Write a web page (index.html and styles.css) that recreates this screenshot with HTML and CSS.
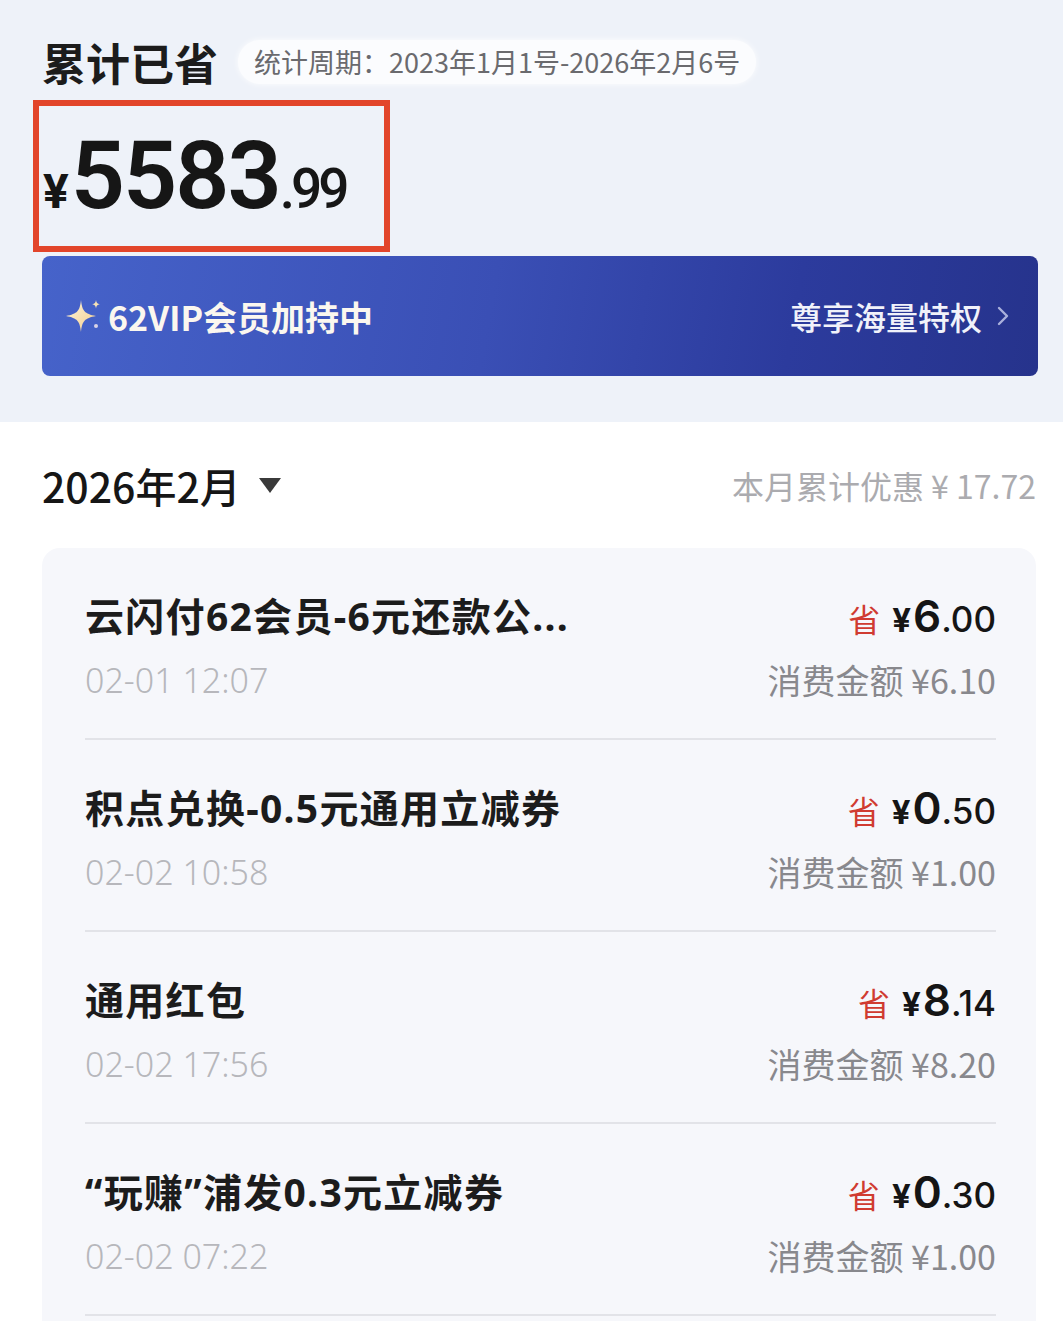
FILE: index.html
```html
<!DOCTYPE html>
<html lang="zh-CN">
<head>
    <meta charset="UTF-8">
    <meta name="viewport" content="width=device-width, initial-scale=1.0">
    <title>累计已省</title>
    <link rel="stylesheet" href="styles.css">
</head>
<body>
    <div class="top">
        <div class="head-row">
            <h1 class="head-title">累计已省</h1>
            <span class="period">统计周期：2023年1月1号-2026年2月6号</span>
        </div>
        <div class="total-box">
            <span class="total-yen">¥</span><span class="total-int">5583</span><span class="total-dec">.99</span>
        </div>
        <div class="vip-bar">
            <div class="vip-left">
                <svg class="sparkle" width="36" height="36" viewBox="0 0 36 36">
                    <defs>
                        <linearGradient id="spk" x1="0" y1="0" x2="1" y2="1">
                            <stop offset="0" stop-color="#fff5dc"/>
                            <stop offset="1" stop-color="#f2cd8c"/>
                        </linearGradient>
                    </defs>
                    <path d="M15 2 C16.2 13 18.5 15.8 30 18 C18.5 20.2 16.2 23 15 34 C13.8 23 11.5 20.2 0 18 C11.5 15.8 13.8 13 15 2 Z" fill="url(#spk)"/>
                    <path d="M30 2 C30.4 4.8 31.2 5.6 33.8 6.2 C31.2 6.8 30.4 7.6 30 10.4 C29.6 7.6 28.8 6.8 26.2 6.2 C28.8 5.6 29.6 4.8 30 2 Z" fill="#f6e2b6"/>
                    <circle cx="30" cy="28" r="2" fill="#d9d3e6"/>
                </svg>
                <span>62VIP会员加持中</span>
            </div>
            <div class="vip-right">
                <span>尊享海量特权</span>
                <svg class="chevron" width="14" height="22" viewBox="0 0 14 22">
                    <path d="M3 3 L11 11 L3 19" fill="none" stroke="#aab1dc" stroke-width="2.4" stroke-linecap="round" stroke-linejoin="round"/>
                </svg>
            </div>
        </div>
    </div>

    <div class="main">
        <div class="month-row">
            <div class="month">2026年2月<span class="caret"></span></div>
            <div class="month-sum">本月累计优惠 ¥ 17.72</div>
        </div>

        <div class="card">
            <div class="item">
                <div class="item-left">
                    <div class="item-title">云闪付62会员-6元还款公...</div>
                    <div class="item-date">02-01 12:07</div>
                </div>
                <div class="item-right">
                    <div class="save"><span class="save-tag">省</span><span class="save-yen">¥</span><span class="save-int">6</span><span class="save-dec">.00</span></div>
                    <div class="spent">消费金额 ¥6.10</div>
                </div>
            </div>
            <div class="item">
                <div class="item-left">
                    <div class="item-title">积点兑换-0.5元通用立减券</div>
                    <div class="item-date">02-02 10:58</div>
                </div>
                <div class="item-right">
                    <div class="save"><span class="save-tag">省</span><span class="save-yen">¥</span><span class="save-int">0</span><span class="save-dec">.50</span></div>
                    <div class="spent">消费金额 ¥1.00</div>
                </div>
            </div>
            <div class="item">
                <div class="item-left">
                    <div class="item-title">通用红包</div>
                    <div class="item-date">02-02 17:56</div>
                </div>
                <div class="item-right">
                    <div class="save"><span class="save-tag">省</span><span class="save-yen">¥</span><span class="save-int">8</span><span class="save-dec">.14</span></div>
                    <div class="spent">消费金额 ¥8.20</div>
                </div>
            </div>
            <div class="item">
                <div class="item-left">
                    <div class="item-title">“玩赚”浦发0.3元立减券</div>
                    <div class="item-date">02-02 07:22</div>
                </div>
                <div class="item-right">
                    <div class="save"><span class="save-tag">省</span><span class="save-yen">¥</span><span class="save-int">0</span><span class="save-dec">.30</span></div>
                    <div class="spent">消费金额 ¥1.00</div>
                </div>
            </div>
        </div>
    </div>
</body>
</html>
```

FILE: styles.css
```css
body {
    margin: 0;
    background-color: #fff;
    color: #1a1a1a;
    font-family: "Noto Sans", "Noto Sans CJK SC", sans-serif;
    overflow: hidden;
}
.top {
    background-color: #eef2f9;
    padding: 40px 25px 46px 42px;
}
.head-row {
    display: flex;
    align-items: center;
    gap: 20px;
    height: 44px;
}
.head-title {
    margin: 0;
    font-size: 44px;
    font-weight: 700;
    line-height: 44px;
    color: #1c1c1c;
    font-family: "Noto Sans CJK SC", sans-serif;
}
.period {
    background-color: #fbfcfe;
    border-radius: 22px;
    height: 44px;
    line-height: 44px;
    padding: 0 16px;
    font-size: 27px;
    color: #6a6a6e;
    font-family: "Noto Sans CJK SC", sans-serif;
    box-shadow: 0 0 6px rgba(255, 255, 255, 0.9);
}
.total-box {
    display: flex;
    align-items: baseline;
    box-sizing: border-box;
    width: 357px;
    height: 152px;
    margin: 16px 0 0 -9px;
    border: 6px solid #e2452b;
    padding: 22px 0 0 4px;
    font-family: Roboto, sans-serif;
    color: #161616;
}
.total-yen {
    font-size: 48px;
    font-weight: 700;
    line-height: 1;
    margin-right: 2px;
}
.total-int {
    font-size: 95px;
    font-weight: 600;
    line-height: 1;
    letter-spacing: -2px;
}
.total-dec {
    font-size: 55px;
    font-weight: 500;
    line-height: 1;
    letter-spacing: -4px;
}
.vip-bar {
    display: flex;
    align-items: center;
    justify-content: space-between;
    height: 120px;
    margin-top: 4px;
    border-radius: 8px;
    padding: 0 28px 0 24px;
    background: linear-gradient(100deg, #4663ca 0%, #3a4fb5 45%, #2c3b9d 75%, #26338c 100%);
    color: #fff;
    font-family: "Noto Sans CJK SC", sans-serif;
}
.vip-left {
    display: flex;
    align-items: center;
    gap: 6px;
    font-size: 34px;
    font-weight: 700;
    color: #fbf7ef;
}
.vip-right {
    display: flex;
    align-items: center;
    gap: 14px;
    font-size: 32px;
    font-weight: 500;
    color: #f1f2fa;
}
.main {
    padding: 0 27px 0 42px;
}
.month-row {
    display: flex;
    align-items: center;
    justify-content: space-between;
    height: 126px;
}
.month {
    display: flex;
    align-items: center;
    font-size: 41px;
    font-weight: 500;
    color: #161616;
    font-family: "Noto Sans CJK SC", sans-serif;
}
.caret {
    width: 0;
    height: 0;
    margin-left: 18px;
    border-left: 11px solid transparent;
    border-right: 11px solid transparent;
    border-top: 15px solid #3a3a3a;
}
.month-sum {
    font-size: 32px;
    color: #ababaf;
    font-family: "Noto Sans CJK SC", sans-serif;
}
.card {
    background-color: #f6f7fb;
    border-radius: 18px;
    padding: 0 40px 40px 43px;
}
.item {
    display: flex;
    justify-content: space-between;
    height: 192px;
    box-sizing: border-box;
    padding: 44px 0 0;
    border-bottom: 2px solid #e2e3e8;
}
.item-title {
    font-size: 39px;
    font-weight: 700;
    line-height: 48px;
    letter-spacing: 1.3px;
    color: #1c1c1c;
}
.item-date {
    margin-top: 18px;
    font-size: 34px;
    line-height: 44px;
    font-weight: 300;
    color: #b7b7bc;
}
.item-right {
    display: flex;
    flex-direction: column;
    align-items: flex-end;
}
.save {
    display: flex;
    align-items: baseline;
    height: 48px;
    line-height: 48px;
    font-family: Inter, sans-serif;
    color: #151515;
}
.save-tag {
    font-size: 32px;
    color: #d03b31;
    margin-right: 12px;
    font-family: "Noto Sans CJK SC", sans-serif;
}
.save-yen {
    font-size: 33px;
    font-weight: 700;
    margin-right: 2px;
}
.save-int {
    font-size: 44px;
    font-weight: 600;
}
.save-dec {
    font-size: 35px;
    font-weight: 500;
}
.spent {
    margin-top: 18px;
    font-size: 34px;
    line-height: 44px;
    color: #88888d;
    font-family: "Noto Sans CJK SC", sans-serif;
}
```
